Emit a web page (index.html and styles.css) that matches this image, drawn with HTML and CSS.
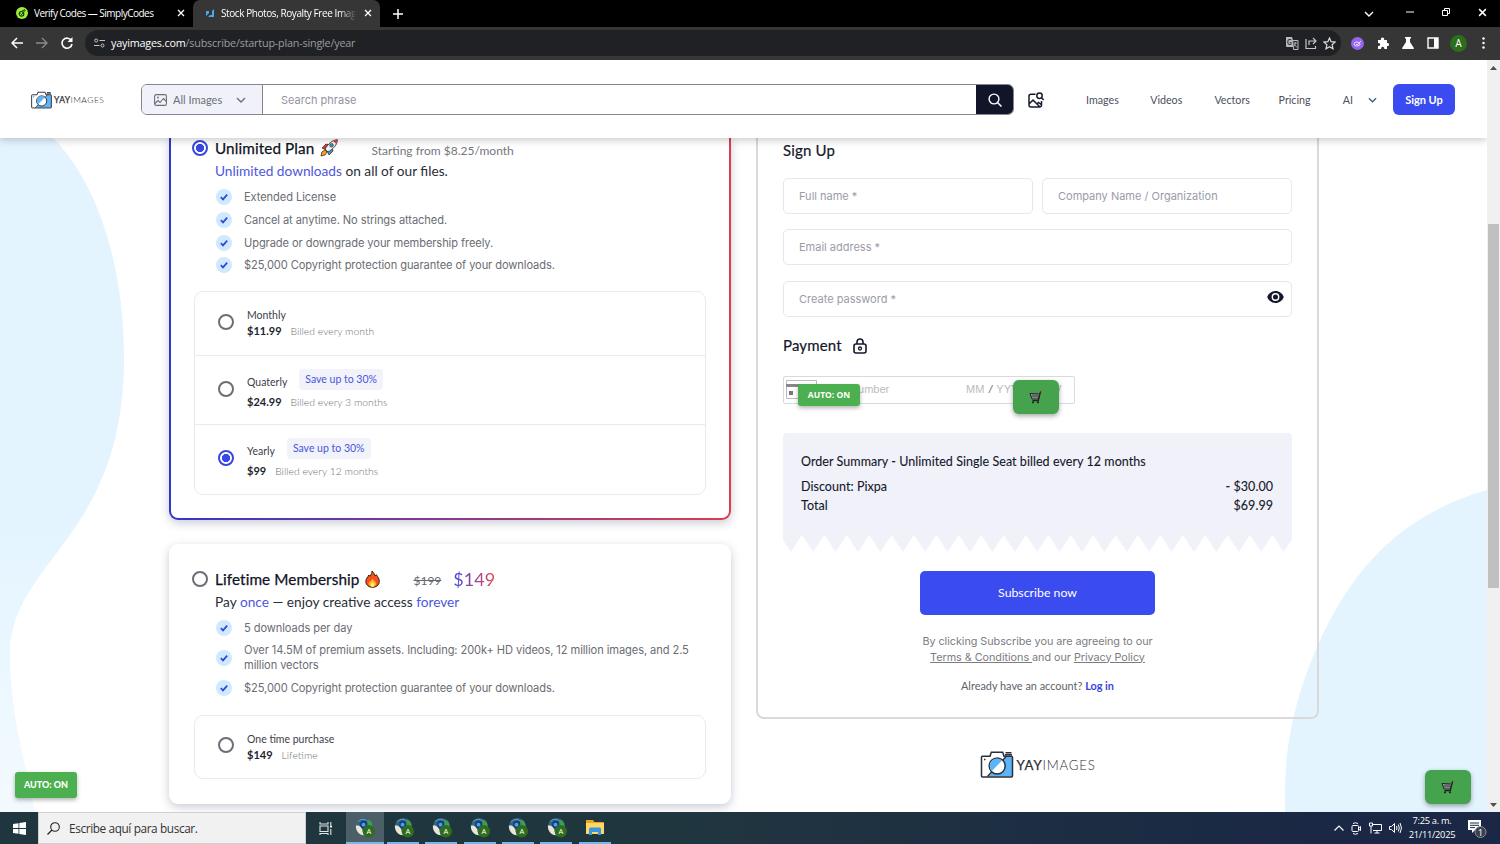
FILE: index.html
```html
<!DOCTYPE html>
<html lang="en">
<head>
    <meta charset="UTF-8">
    <meta name="viewport" content="width=device-width, initial-scale=1.0">
    <title>Stock Photos, Royalty Free Images</title>
    <link rel="stylesheet" href="styles.css">
</head>
<body>
    <svg class="defs">
        <symbol id="camera" viewBox="0 0 33 27">
            <path d="M31.8 5.5v20H7.5L25 6z" fill="#5db4f9"/>
            <path d="M2 5.3h7.5l1.3-4h11.4l1.3 4H31a1 1 0 0 1 1 1V25a1 1 0 0 1-1 1H2a1 1 0 0 1-1-1V6.300a1 1 0 0 1 1-1z" fill="none" stroke="#2b2f38" stroke-width="1.5"/>
            <circle cx="16.700" cy="15" r="8" fill="#fff" stroke="#2b2f38" stroke-width="1.500"/>
            <path d="M11.300 20A7.200 7.200 0 0 1 21.500 9.600z" fill="#5db4f9"/>
            <path d="M7 25.500l4.500-5M22 9.500l4-4.500M3.500 8.500h1.500" stroke="#2b2f38" stroke-width="1.300"/>
            <path d="M25 1.800h6M24.500 3.800h7" stroke="#2b2f38" stroke-width="1.400"/>
        </symbol>
        <symbol id="check" viewBox="0 0 16 16">
            <circle cx="8" cy="8" r="8" fill="#cfe9ff"/>
            <path d="M4.800 8.200l2.200 2.200 4.200-4.800" fill="none" stroke="#3344dd" stroke-width="1.700"/>
        </symbol>
        <symbol id="cart" viewBox="0 0 14 14">
            <path d="M1 3.500l9.500 .5-1.200 5H3z" fill="#a9adb3" stroke="#222" stroke-width="1"/>
            <path d="M4 4v4.500M6 4v4.500M8 4v4.500M2 6h7.500" stroke="#333" stroke-width=".700"/>
            <path d="M13 1.300l-1.500.4-2.200 9H3.500" fill="none" stroke="#222" stroke-width="1.300"/>
            <path d="M11.800 1.600l1.500-.4" stroke="#e05a3a" stroke-width="1.300"/>
            <circle cx="4" cy="12.300" r="1.100" fill="#222"/><circle cx="9" cy="12.300" r="1.100" fill="#222"/>
        </symbol>
        <symbol id="profile" viewBox="-1 0 22 22">
            <circle cx="10" cy="10" r="9" fill="#2f6583"/>
            <path d="M1 9c4-1 6 2 7 5s3 4 3 5C5 20 .5 15 1 9z" fill="#e9e6d8"/>
            <path d="M3 5c4-4 9-3 11 1" fill="none" stroke="#6ba5cb" stroke-width="1"/>
            <circle cx="9.500" cy="8" r="4" fill="#173f75"/><circle cx="9" cy="8" r="2" fill="#4f9df0"/>
            <path d="M13 3c4 0 6 4 5 9h-5z" fill="#3f9c55"/>
            <circle cx="14.500" cy="15" r="6.500" fill="#2f6d1c"/>
            <text x="14.500" y="18" text-anchor="middle" font-size="8" fill="#fff">A</text>
        </symbol>
        <symbol id="chevron" viewBox="0 0 10 6"><path d="M1 1l4 4 4-4" fill="none" stroke="currentColor" stroke-width="1.400"/></symbol>
        <symbol id="close" viewBox="0 0 8 8"><path d="M1 1l6 6M7 1L1 7" stroke="currentColor" stroke-width="1.300"/></symbol>
    </svg>

    <div class="tabs">
        <div class="tab">
            <svg width="12" height="12" viewBox="0 0 12 12"><circle cx="6" cy="6" r="6" fill="#a0ee3c"/><circle cx="5.500" cy="6.800" r="2.300" fill="none" stroke="#1b3510" stroke-width="1.200"/><path d="M4.500 6.500l1 1L9.500 3M6 4l3-1.500" fill="none" stroke="#1b3510"/></svg>
            <span class="tab-title">Verify Codes — SimplyCodes</span>
            <svg class="tab-close" width="8" height="8"><use href="#close"/></svg>
        </div>
        <div class="tab active">
            <svg width="10" height="10" viewBox="0 0 10 10"><path d="M9 1v8H3l2-2h2V3zM1 3h3v2L1 8z" fill="#4aa8ec"/></svg>
            <span class="tab-title fade">Stock Photos, Royalty Free Images</span>
            <svg class="tab-close" width="8" height="8"><use href="#close"/></svg>
        </div>
        <svg class="new-tab" width="10" height="10" viewBox="0 0 10 10"><path d="M5 0v10M0 5h10" stroke="#fff" stroke-width="1.500"/></svg>
        <div class="window-buttons">
            <svg width="10" height="6"><use href="#chevron"/></svg>
            <svg width="8" height="8" viewBox="0 0 8 8"><path d="M0 4h8" stroke="#fff"/></svg>
            <svg width="8" height="8" viewBox="0 0 8 8"><path d="M.5 2.500h5v5h-5zM2.500 2V.5h5v5H6" fill="none" stroke="#fff"/></svg>
            <svg width="9" height="9"><use href="#close"/></svg>
        </div>
    </div>

    <div class="toolbar">
        <svg width="12" height="12" viewBox="0 0 12 12"><path d="M12 6H1.500M6 1L1 6l5 5" fill="none" stroke="#fff" stroke-width="1.500"/></svg>
        <svg width="12" height="12" viewBox="0 0 12 12"><path d="M0 6h10.500M6 1l5 5-5 5" fill="none" stroke="#8a8b8d" stroke-width="1.300"/></svg>
        <svg width="12" height="12" viewBox="0 0 12 12"><path d="M10.300 3.500A5 5 0 1 0 11 7" fill="none" stroke="#fff" stroke-width="1.600"/><path d="M11.500 0v5h-5z" fill="#fff"/></svg>
        <div class="address">
            <svg width="11" height="10" viewBox="0 0 11 10"><path d="M5.500 2.500H11M0 7.500h5.500" stroke="#c4c7c5" stroke-width="1.200"/><circle cx="2.200" cy="2.500" r="1.500" fill="none" stroke="#c4c7c5"/><circle cx="8.500" cy="7.500" r="1.500" fill="none" stroke="#c4c7c5"/></svg>
            <span class="url"><b>yayimages.com</b>/subscribe/startup-plan-single/year</span>
            <div class="address-icons">
                <svg width="13" height="13" viewBox="0 0 13 13"><path d="M0 0h6l3 10H1a1 1 0 0 1-1-1z" fill="#b9bbbd"/><path d="M6.500 3.500H12v9H7.500z" fill="#292a2e" stroke="#b9bbbd"/><path d="M7.500 6H11M9.300 5v1c0 2-1 3-1.800 3.700M8 7l3 3.500" stroke="#b9bbbd" stroke-width=".8" fill="none"/><text x="1" y="7.500" font-size="6.500" font-weight="700" fill="#292a2e">G</text></svg>
                <svg width="12" height="13" viewBox="0 0 12 13"><path d="M1 2v9.500h9.500V9M4 8V4h6M8 1l3 3-3 3" fill="none" stroke="#c4c7c5" stroke-width="1.200"/></svg>
                <svg width="13" height="13" viewBox="0 0 13 13"><path d="M6.500 1l1.600 3.700 4 .4-3 2.700.9 4-3.500-2.100-3.500 2.100.9-4-3-2.700 4-.4z" fill="none" stroke="#dcdedd" stroke-width="1.200"/></svg>
            </div>
        </div>
        <div class="extensions">
            <svg width="13" height="13" viewBox="0 0 13 13"><circle cx="6.500" cy="6.500" r="6.500" fill="#9466ee"/><ellipse cx="6" cy="7" rx="3" ry="2" fill="none" stroke="#e5d9ff"/><path d="M5 7l1 1 4-4" fill="none" stroke="#e5d9ff"/></svg>
            <svg width="12" height="12" viewBox="0 0 12 12"><path d="M1 3h3a1.700 1.700 0 1 1 3 0h3v3a1.600 1.600 0 1 1 0 3v3H7.200a1.600 1.600 0 1 0-3 0H1V9a1.600 1.600 0 1 0 0-3z" fill="#fff"/></svg>
            <svg width="12" height="12" viewBox="0 0 12 12"><path d="M3 0h6v1.500H8V5l4 6.200-.5.800H.5L0 11.200 4 5V1.500H3z" fill="#fff"/></svg>
            <svg width="12" height="12" viewBox="0 0 12 12"><path d="M1 1h10v10H1z" fill="none" stroke="#fff" stroke-width="1.400"/><path d="M7 1h4v10H7z" fill="#fff"/></svg>
            <span class="avatar">A</span>
            <svg width="3" height="12" viewBox="0 0 3 12"><circle cx="1.500" cy="1.500" r="1.200" fill="#fff"/><circle cx="1.500" cy="6" r="1.200" fill="#fff"/><circle cx="1.500" cy="10.500" r="1.200" fill="#fff"/></svg>
        </div>
    </div>

    <div class="viewport">
        <div class="site">
            <svg class="shapes" width="1487" height="752" viewBox="0 60 1487 752">
                <defs><linearGradient id="fadeBlue" x1="0" y1="0" x2="0" y2="1"><stop offset="0" stop-color="#e3f4ff"/><stop offset=".6" stop-color="#e3f4ff"/><stop offset="1" stop-color="#f3faff"/></linearGradient></defs>
                <path d="M0 60V812H35C28 770 10 720 10 655C10 560 124 540 124 358C124 260 95 180 53 138V60z" fill="url(#fadeBlue)"/>
                <path d="M1487 490C1400 515 1358 568 1330 620C1303 672 1285 730 1285 790V812H1487z" fill="#e4f4ff"/>
            </svg>

            <header class="header">
                <div class="logo">
                    <svg width="21" height="18"><use href="#camera"/></svg>
                    <span class="logo-text"><b>YAY</b>IMAGES</span>
                </div>
                <div class="search">
                    <div class="search-type">
                        <svg width="13" height="12" viewBox="0 0 13 12"><rect x=".6" y=".6" width="11.800" height="10.800" rx="1.500" fill="none" stroke="#6b6e78" stroke-width="1.100"/><path d="M1 9.500l3-3 2 2 3.500-4 3 3" fill="none" stroke="#6b6e78" stroke-width="1.100"/><circle cx="4" cy="3.500" r=".9" fill="#6b6e78"/></svg>
                        <span>All Images</span>
                        <svg width="10" height="6"><use href="#chevron"/></svg>
                    </div>
                    <div class="search-input">Search phrase</div>
                    <div class="search-button">
                        <svg width="14" height="14" viewBox="0 0 14 14"><circle cx="6" cy="6" r="4.900" fill="none" stroke="#fff" stroke-width="1.400"/><path d="M9.500 9.500l4 4" stroke="#fff" stroke-width="1.500"/></svg>
                    </div>
                </div>
                <svg class="image-search" width="16" height="16" viewBox="0 0 16 16"><path d="M7.500 2.300H3a2 2 0 0 0-2 2V13a2 2 0 0 0 2 2h8.500a2 2 0 0 0 2-2V9M1.500 11.500L5 8l6.500 6.500M9 12l1.500-1.500 2.700 2" fill="none" stroke="#161a2b" stroke-width="1.500"/><circle cx="11.500" cy="3.800" r="2.700" fill="none" stroke="#161a2b" stroke-width="1.500"/><path d="M13.500 5.800l2.200 2.200" stroke="#161a2b" stroke-width="1.500"/></svg>
                <nav class="nav">
                    <a>Images</a>
                    <a>Videos</a>
                    <a>Vectors</a>
                    <a>Pricing</a>
                    <a>AI</a>
                    <svg width="9" height="6"><use href="#chevron"/></svg>
                </nav>
                <div class="signup-button">Sign Up</div>
            </header>

            <main class="content">
                <div class="plans">
                    <section class="plan selected">
                        <div class="plan-title">
                            <span class="radio on"></span>
                            <h2>Unlimited Plan</h2>
                            <svg class="rocket" width="18" height="18" viewBox="0 0 18 18"><path d="M2 9l4-4 4 1-4 5z" fill="#e33c2d" stroke="#222" stroke-width=".7"/><path d="M9 16l4-4-1-4-5 4z" fill="#3a9fc0" stroke="#222" stroke-width=".7"/><path d="M5 10C8 5 12 1 17.300 .7 17.500 6 13 10 8 13z" fill="#edf2f4" stroke="#222" stroke-width=".8"/><path d="M13 1.900L17.300.7l-.9 4.300z" fill="#e23b35"/><circle cx="11.500" cy="6.300" r="1.800" fill="#3a9fc0" stroke="#222" stroke-width=".6"/><path d="M5 11l2 2-2 3-4 1 .8-4z" fill="#ff9c20" stroke="#222" stroke-width=".7"/></svg>
                            <span class="starting">Starting from $8.25/month</span>
                        </div>
                        <p class="tagline"><em>Unlimited downloads</em> on all of our files.</p>
                        <ul class="features">
                            <li><svg width="16" height="16"><use href="#check"/></svg>Extended License</li>
                            <li><svg width="16" height="16"><use href="#check"/></svg>Cancel at anytime. No strings attached.</li>
                            <li><svg width="16" height="16"><use href="#check"/></svg>Upgrade or downgrade your membership freely.</li>
                            <li><svg width="16" height="16"><use href="#check"/></svg>$25,000 Copyright protection guarantee of your downloads.</li>
                        </ul>
                        <div class="options">
                            <div class="option">
                                <span class="radio"></span>
                                <div>
                                    <div class="period"><span>Monthly</span></div>
                                    <div class="price"><b>$11.99</b><span>Billed every month</span></div>
                                </div>
                            </div>
                            <div class="option tall">
                                <span class="radio"></span>
                                <div>
                                    <div class="period"><span>Quaterly</span><span class="save">Save up to 30%</span></div>
                                    <div class="price"><b>$24.99</b><span>Billed every 3 months</span></div>
                                </div>
                            </div>
                            <div class="option tall">
                                <span class="radio on"></span>
                                <div>
                                    <div class="period"><span>Yearly</span><span class="save">Save up to 30%</span></div>
                                    <div class="price"><b>$99</b><span>Billed every 12 months</span></div>
                                </div>
                            </div>
                        </div>
                    </section>

                    <section class="plan lifetime">
                        <div class="plan-title">
                            <span class="radio"></span>
                            <h2>Lifetime Membership</h2>
                            <svg class="fire" width="15" height="18" viewBox="0 0 15 18"><path d="M7 1c2 2 2.500 3.500 3.300 5l1-1.300c1.800 2.500 3 4.300 3 6.800C14.300 15 11 17.300 7.500 17.300S.8 15 .8 11.500C.8 8.500 3 7.500 3.700 5l1.200 1.300C6.500 4.500 7 3 7 1z" fill="#f4511e" stroke="#3b1a10" stroke-width="1"/><path d="M7.500 8.500c.5 2 3.700 3 3.700 5.300 0 2-1.700 3-3.700 3s-3.900-1-3.900-3c0-2.300 3.400-2.800 3.900-5.300z" fill="#ffb51c"/><path d="M7.500 12c1 1.500 1.800 2 1.800 3.200 0 1-.8 1.500-1.800 1.500s-1.800-.5-1.800-1.500c0-1.200.8-1.700 1.800-3.200z" fill="#ffed78"/></svg>
                            <del>$199</del>
                            <span class="new-price">$149</span>
                        </div>
                        <p class="tagline">Pay <em>once</em> — enjoy creative access <em>forever</em></p>
                        <ul class="features">
                            <li><svg width="16" height="16"><use href="#check"/></svg>5 downloads per day</li>
                            <li class="two-lines"><svg width="16" height="16"><use href="#check"/></svg><span>Over 14.5M of premium assets. Including: 200k+ HD videos, 12 million images, and 2.5<br>million vectors</span></li>
                            <li><svg width="16" height="16"><use href="#check"/></svg>$25,000 Copyright protection guarantee of your downloads.</li>
                        </ul>
                        <div class="options">
                            <div class="option">
                                <span class="radio"></span>
                                <div>
                                    <div class="period"><span>One time purchase</span></div>
                                    <div class="price"><b>$149</b><span>Lifetime</span></div>
                                </div>
                            </div>
                        </div>
                    </section>
                </div>

                <div class="checkout">
                    <section class="panel">
                        <h2 class="signup-title">Sign Up</h2>
                        <div class="fields">
                            <div class="field">Full name *</div>
                            <div class="field">Company Name / Organization</div>
                            <div class="field wide">Email address *</div>
                            <div class="field wide">Create password *
                                <svg width="17" height="12" viewBox="0 0 17 12"><path d="M8.500 0C4.700 0 1.600 2.400.2 6c1.400 3.600 4.500 6 8.300 6s6.900-2.400 8.300-6C15.400 2.400 12.300 0 8.500 0z" fill="#14182b"/><circle cx="8.500" cy="6" r="3.200" fill="none" stroke="#fff" stroke-width="1.400"/></svg>
                            </div>
                        </div>
                        <h2 class="payment-title">Payment
                            <svg width="14" height="16" viewBox="0 0 14 16"><rect x="1" y="6" width="12" height="9" rx="2" fill="none" stroke="#14182b" stroke-width="1.600"/><path d="M4 6V4a3 3 0 0 1 6 0v2" fill="none" stroke="#14182b" stroke-width="1.600"/><circle cx="7" cy="10.500" r="1.500" fill="none" stroke="#14182b" stroke-width="1.300"/></svg>
                        </h2>
                        <div class="card-input">
                            <svg width="31" height="19" viewBox="0 0 31 19"><path d="M.5.5h30v18H.5z" fill="#fff" stroke="#bbb"/><path d="M0 4h31v3H0z" fill="#888"/><path d="M3 11h4v4H3z" fill="#777"/></svg>
                            <span class="card-number">Card number</span>
                            <span class="card-date">MM <i>/</i> YYYY</span>
                            <span class="card-cvv">CVV</span>
                            <div class="auto">AUTO: ON</div>
                            <div class="cart"><svg width="14" height="14"><use href="#cart"/></svg></div>
                        </div>
                        <div class="summary">
                            <h3>Order Summary - Unlimited Single Seat billed every 12 months</h3>
                            <div class="summary-row"><span>Discount: Pixpa</span><span>- $30.00</span></div>
                            <div class="summary-row"><span>Total</span><span>$69.99</span></div>
                        </div>
                        <svg class="zigzag" width="509" height="17">
                            <defs><pattern id="teeth" x="-3.400" width="22.400" height="17" patternUnits="userSpaceOnUse"><path d="M0 0h22.400L11.200 17z" fill="#f1f2f9"/></pattern></defs>
                            <rect width="509" height="17" fill="url(#teeth)"/>
                        </svg>
                        <div class="subscribe">Subscribe now</div>
                        <p class="terms">By clicking Subscribe you are agreeing to our<br><u>Terms &amp; Conditions </u>and our <u>Privacy Policy</u></p>
                        <p class="login">Already have an account? <b>Log in</b></p>
                    </section>
                    <div class="logo big">
                        <svg width="34" height="27"><use href="#camera"/></svg>
                        <span class="logo-text"><b>YAY</b>IMAGES</span>
                    </div>
                </div>
            </main>

            <div class="auto page-auto">AUTO: ON</div>
            <div class="cart page-cart"><svg width="14" height="14"><use href="#cart"/></svg></div>
        </div>
        <div class="scrollbar">
            <svg width="7" height="4" viewBox="0 0 7 4"><path d="M0 4l3.500-4L7 4z" fill="#505050"/></svg>
            <div class="thumb"></div>
            <svg width="7" height="4" viewBox="0 0 7 4"><path d="M0 0l3.500 4L7 0z" fill="#505050"/></svg>
        </div>
    </div>

    <div class="taskbar">
        <div class="start"><svg width="13" height="13" viewBox="0 0 13 13"><path d="M0 2l5.500-.8V6H0zM6.300 1L13 0v6H6.300zM0 7h5.500v4.800L0 11zM6.300 7H13v6l-6.700-1z" fill="#fff"/></svg></div>
        <div class="taskbar-search">
            <svg width="13" height="13" viewBox="0 0 13 13"><circle cx="8" cy="5" r="4.300" fill="none" stroke="#222" stroke-width="1.100"/><path d="M5 8l-4.500 4.500" stroke="#222" stroke-width="1.200"/></svg>
            <span>Escribe aquí para buscar.</span>
        </div>
        <div class="taskview"><svg width="13" height="13" viewBox="0 0 13 13"><path d="M1 4h8v5.500H1zM1 0v2h8V0M1 13v-1.500h8V13M11.800 0v3M11.800 7v6" fill="none" stroke="#dfe5e8" stroke-width="1.100"/><path d="M11 3.500h2v2h-2z" fill="#fff"/></svg></div>
        <div class="apps">
            <div class="app current"><svg width="21" height="21"><use href="#profile"/></svg></div>
            <div class="app"><svg width="21" height="21"><use href="#profile"/></svg></div>
            <div class="app"><svg width="21" height="21"><use href="#profile"/></svg></div>
            <div class="app"><svg width="21" height="21"><use href="#profile"/></svg></div>
            <div class="app"><svg width="21" height="21"><use href="#profile"/></svg></div>
            <div class="app"><svg width="21" height="21"><use href="#profile"/></svg></div>
            <div class="app"><svg width="18" height="15" viewBox="0 0 18 15"><path d="M0 0h7l1.500 2H17a1 1 0 0 1 1 1v11H0z" fill="#e8a71e"/><path d="M0 3h18v11H0z" fill="#ffd766"/><path d="M3 15V9a1.500 1.500 0 0 1 1.500-1.500h9A1.500 1.500 0 0 1 15 9v6h-3v-3H6v3z" fill="#3a96dd"/></svg></div>
        </div>
        <div class="tray">
            <svg width="10" height="6" viewBox="0 0 10 6"><path d="M.5 5.500L5 1l4.500 4.500" fill="none" stroke="#fff" stroke-width="1.100"/></svg>
            <svg width="11" height="13" viewBox="0 0 11 13"><rect x="1" y="3.500" width="6.500" height="6" rx="1" fill="none" stroke="#fff"/><path d="M7.500 6l2-1.500v4L7.500 7M2 1.500q2.500-1.500 5 0M2 11.500q2.500 1.500 5 0" fill="none" stroke="#fff"/></svg>
            <svg width="13" height="12" viewBox="0 0 13 12"><path d="M4 2.500h8.500v6H4M8 8.500v2.500M5.500 11h5M.5 1h3v3h-3zM2 4v7.500" fill="none" stroke="#fff"/></svg>
            <svg width="13" height="12" viewBox="0 0 13 12"><path d="M.5 4.500h2l3-3v9l-3-3h-2zM7.500 4q1 2 0 4M9.300 2.500q2 3.500 0 7M11 1q3 5 0 10" fill="none" stroke="#fff"/></svg>
            <div class="clock">7:25 a. m.<br>21/11/2025</div>
            <svg width="20" height="20" viewBox="0 0 20 20"><path d="M1 2h13v10H8l-3 3v-3H1z" fill="#fff"/><path d="M3 5h9M3 7.300h9M3 9.600h5" stroke="#1c2a45"/><circle cx="13.500" cy="14" r="5.500" fill="#3a414d" stroke="#8a919c"/><text x="13.500" y="17.500" text-anchor="middle" font-size="9.500" fill="#fff">1</text></svg>
        </div>
    </div>
</body>
</html>
```
FILE: styles.css
```css
* {
    box-sizing: border-box;
}
body {
    margin: 0;
    width: 1500px;
    height: 844px;
    overflow: hidden;
    display: flex;
    flex-direction: column;
    font-family: 'Lato', sans-serif;
    background: #fff;
    color: #14182b;
}
h2, h3, p, ul {
    margin: 0;
    padding: 0;
    font-weight: normal;
}
svg {
    flex-shrink: 0;
    display: block;
}
.defs {
    position: absolute;
    width: 0;
    height: 0;
}

/* browser */
.tabs {
    height: 27px;
    background: #000;
    display: flex;
    align-items: center;
    color: #fff;
    font: 10px 'Open Sans', sans-serif;
}
.tab {
    height: 27px;
    width: 193px;
    padding: 0 8px 1px 16px;
    display: flex;
    align-items: center;
    white-space: nowrap;
}
.tab.active {
    width: 187px;
    padding: 0 8px 1px 12px;
    background: #363636;
    border-radius: 7px 7px 0 0;
}
.tab-title {
    margin-left: 6px;
    letter-spacing: -0.52px;
}
.tab-title.fade {
    width: 134px;
    overflow: hidden;
    letter-spacing: -0.42px;
    -webkit-mask-image: linear-gradient(to right, #000 118px, transparent 136px);
}
.tab-close {
    margin-left: auto;
}
.new-tab {
    margin-left: 13px;
}
.window-buttons {
    margin: -3px 13px 0 auto;
    display: flex;
    align-items: center;
    gap: 28px;
}
.window-buttons svg:first-child {
    margin: 4px 4px 0 0;
}
.toolbar {
    height: 33px;
    background: #363636;
    display: flex;
    align-items: center;
    gap: 13px;
    padding: 0 15px 1px 11px;
}
.address {
    height: 26px;
    width: 1256px;
    margin-left: -1px;
    border-radius: 13px;
    background: #202124;
    display: flex;
    align-items: center;
    padding: 0 5px 0 9px;
}
.url {
    margin: -1px 0 0 6px;
    font: 10.8px 'Open Sans', sans-serif;
    color: #9a9da1;
    letter-spacing: -0.2px;
}
.url b {
    font-weight: normal;
    color: #fff;
}
.address-icons {
    margin-left: auto;
    display: flex;
    align-items: center;
    gap: 6px;
}
.extensions {
    flex: 1;
    display: flex;
    align-items: center;
    justify-content: space-between;
    margin-left: -3px;
}
.avatar {
    width: 17px;
    height: 17px;
    margin: 0 2px 0 -2px;
    border-radius: 50%;
    background: #2c6e1b;
    color: #fff;
    font: 10px/17px Roboto, sans-serif;
    text-align: center;
}
.viewport {
    height: 752px;
    display: flex;
}
.site {
    width: 1487px;
    height: 752px;
    position: relative;
    overflow: hidden;
}
.shapes {
    position: absolute;
    left: 0;
    top: 0;
}
.scrollbar {
    width: 13px;
    background: #f0f0f0;
    display: flex;
    flex-direction: column;
    align-items: center;
    justify-content: space-between;
    padding: 6px 0 5px;
}
.thumb {
    width: 11px;
    height: 364px;
    margin-bottom: 62px;
    background: #c0c0c0;
}

/* header */
.header {
    position: relative;
    z-index: 2;
    height: 78px;
    padding: 1px 32px 0 31px;
    background: #fff;
    box-shadow: 0 2px 8px rgba(0, 0, 0, 0.22);
    display: flex;
    align-items: center;
}
.logo {
    width: 110px;
    display: flex;
    align-items: center;
    gap: 2px;
}
.logo-text {
    font-size: 8.5px;
    font-weight: 300;
    letter-spacing: 0.45px;
    color: #2c2f36;
}
.logo-text b {
    -webkit-text-stroke: 0.25px;
}
.search {
    width: 873px;
    height: 31px;
    display: flex;
    border: 1px solid #85858b;
    border-radius: 6px;
    overflow: hidden;
}
.search-type {
    width: 121px;
    background: #f1f2f9;
    border-right: 1px solid #85858b;
    display: flex;
    align-items: center;
    padding: 0 16px 0 12px;
    font-size: 11px;
    color: #6b6e78;
}
.search-type span {
    margin: 0 auto 0 6px;
}
.search-input {
    flex: 1;
    padding-left: 18px;
    font: 11px/31px Inter, sans-serif;
    color: #92949f;
}
.search-button {
    width: 38px;
    margin: -1px;
    background: #10152a;
    display: flex;
    align-items: center;
    justify-content: center;
}
.image-search {
    margin-left: 14px;
}
.nav {
    margin-left: 42px;
    display: flex;
    align-items: center;
    font-size: 10.7px;
    color: #4c505b;
}
.nav a {
    width: 64.200px;
}
.nav a:nth-child(5) {
    width: 25px;
}
.nav svg {
    color: #3e6078;
}
.signup-button {
    margin-left: auto;
    width: 62px;
    height: 31px;
    border-radius: 6px;
    background: #3a4cf0;
    color: #fff;
    font-size: 11px;
    font-weight: bold;
    line-height: 31px;
    text-align: center;
}

/* plans */
.content {
    position: relative;
    display: flex;
    gap: 25px;
    padding-left: 169px;
}
.plans {
    width: 562px;
}
.plan {
    background: #fff;
    border-radius: 9px;
    box-shadow: 0 3px 10px rgba(40, 50, 90, 0.25);
}
.plan.selected {
    height: 382px;
    padding: 0 23px;
    border: 2px solid transparent;
    border-top: none;
    border-radius: 0 0 9px 9px;
    background: linear-gradient(#fff, #fff) padding-box, linear-gradient(to right, #3436c8, #dd3c50) border-box;
}
.plan.lifetime {
    height: 260px;
    margin-top: 24px;
    padding: 25px 25px 0;
}
.plan-title {
    height: 22px;
    padding-bottom: 2px;
    display: flex;
    align-items: center;
    margin-left: -2px;
}
.plan-title h2 {
    margin-left: 7px;
    font-size: 15.3px;
    letter-spacing: 0.1px;
    color: #10131f;
    -webkit-text-stroke: 0.25px;
}
.rocket, .fire {
    margin-left: 6px;
}
.radio {
    width: 16px;
    height: 16px;
    flex-shrink: 0;
    border: 2px solid #6b6e75;
    border-radius: 50%;
    background: #fff;
}
.radio.on {
    border-color: #3848e0;
    background: radial-gradient(#3848e0 3.8px, #fff 4.4px);
}
.starting {
    margin: 4px 0 0 33px;
    font-size: 12px;
    color: #74767c;
}
.tagline {
    height: 22px;
    line-height: 22px;
    padding-left: 21px;
    font-size: 13.7px;
    color: #2b2e37;
}
.tagline em {
    font-style: normal;
    color: #4d58dc;
}
.features {
    list-style: none;
    margin-top: 4px;
    padding-left: 21.500px;
    font: 11.1px Inter, sans-serif;
    letter-spacing: -0.08px;
    color: #6a6d73;
}
.features li {
    height: 22.7px;
    display: flex;
    align-items: center;
    gap: 12.500px;
}
.features .two-lines {
    height: 37.300px;
    line-height: 15.5px;
}
.options {
    margin-top: 14px;
    border: 1px solid #e9eaee;
    border-radius: 9px;
}
.option {
    height: 63px;
    display: flex;
    align-items: center;
    padding: 0 0 3px 23px;
    gap: 13px;
}
.option > div {
    padding-top: 4px;
}
.option.tall {
    height: 69.500px;
    border-top: 1px solid #e9eaee;
}
.option.tall > div {
    padding-top: 1px;
}
.period {
    display: flex;
    align-items: flex-end;
    font-size: 10.5px;
    line-height: 15px;
    color: #3d4048;
}
.tall .period > span:first-child {
    margin-bottom: 4px;
}
.period .save {
    margin: 0 0 4px 12px;
    padding: 0 6px;
    height: 21px;
    line-height: 21px;
    border-radius: 4px;
    background: #f1f2fa;
    color: #4a55dc;
}
.price {
    display: flex;
    gap: 9px;
    font-size: 10.4px;
    font-weight: 300;
    line-height: 16px;
    color: #6d6f75;
}
.price b {
    font-size: 11px;
    font-weight: 700;
    color: #22252e;
}
.lifetime .features {
    margin-top: 4px;
}
.lifetime .options {
    margin-top: 15px;
}
.lifetime .option {
    height: 62px;
}
del {
    margin: 3px 0 0 33px;
    font-size: 12px;
    color: #65676d;
}
.new-price {
    margin-left: 12px;
    font-size: 18px;
    background: linear-gradient(to right, #3f48d8, #e0445a);
    -webkit-background-clip: text;
    color: transparent;
}

/* checkout */
.checkout {
    width: 563px;
}
.panel {
    height: 581px;
    padding: 0 25px;
    border: 2px solid #d9d9dc;
    border-top: none;
    border-radius: 0 0 8px 8px;
}
.panel h2 {
    font-size: 15px;
    letter-spacing: 0.15px;
    -webkit-text-stroke: 0.2px;
}
.signup-title {
    height: 39.500px;
    line-height: 24px;
}
.fields {
    display: grid;
    grid-template-columns: 1fr 1fr;
    gap: 15.500px 9px;
}
.field {
    height: 36px;
    border: 1px solid #e6e7ea;
    border-radius: 5px;
    padding: 0 7px 0 15px;
    display: flex;
    align-items: center;
    justify-content: space-between;
    background: #fff;
    font: 11px Inter, sans-serif;
    color: #9a9ca8;
}
.field svg {
    margin-bottom: 3px;
}
.field.wide {
    grid-column: span 2;
}
.payment-title {
    height: 59.500px;
    padding-bottom: 2px;
    display: flex;
    align-items: center;
    gap: 11px;
}
.payment-title svg {
    margin-top: 2px;
}
.card-input {
    position: relative;
    width: 292px;
    height: 28px;
    border: 1px solid #dadada;
    border-radius: 2px;
    display: flex;
    align-items: center;
    padding: 0 0 2px 2px;
    font: 11px 'Liberation Sans', sans-serif;
    color: #bbb;
    background: #fff;
}
.card-number {
    width: 141px;
    margin-left: 8px;
}
.card-date {
    width: 73px;
    word-spacing: 1.500px;
}
.card-date i {
    color: #666;
}
.auto {
    position: absolute;
    left: 14px;
    top: 7px;
    width: 62px;
    height: 22px;
    border-radius: 3px;
    background: #4caf50;
    box-shadow: 0 2px 4px rgba(0, 0, 0, 0.3);
    color: #fff;
    font: bold 8.5px/22px 'Open Sans', sans-serif;
    text-align: center;
}
.cart {
    position: absolute;
    left: 229px;
    top: 3px;
    width: 46px;
    height: 34px;
    border-radius: 6px;
    background: #45a34d;
    box-shadow: 0 2px 5px rgba(0, 0, 0, 0.35);
    display: flex;
    align-items: center;
    justify-content: center;
}
.page-auto {
    left: 15px;
    top: 712px;
    height: 26px;
    line-height: 26px;
    font-family: 'Lato', sans-serif;
    font-weight: 900;
    font-size: 9px;
}
.page-cart {
    left: 1425px;
    top: 710px;
}
.summary {
    height: 102px;
    margin-top: 29px;
    padding: 19px 19px 0 18px;
    border-radius: 4px 4px 0 0;
    background: #f1f2f9;
    font-size: 12.500px;
    line-height: 19px;
    letter-spacing: 0.05px;
    -webkit-text-stroke: 0.1px;
}
.summary h3 {
    font-size: 12.500px;
    margin-bottom: 6px;
}
.summary-row {
    display: flex;
    justify-content: space-between;
}
.subscribe {
    width: 235px;
    height: 44px;
    margin: 19px auto 0;
    border-radius: 5px;
    background: #3a4cf0;
    color: #fff;
    font-size: 12.300px;
    line-height: 44px;
    text-align: center;
}
.terms {
    margin-top: 19px;
    font: 10.800px/15.500px Inter, sans-serif;
    letter-spacing: -0.03px;
    color: #7a7c82;
    text-align: center;
}
.login {
    margin-top: 13px;
    font-size: 10.9px;
    line-height: 15px;
    text-align: center;
    color: #606269;
}
.login b {
    color: #3a48dc;
}
.logo.big {
    width: auto;
    margin-top: 32px;
    justify-content: center;
    gap: 3px;
}
.big .logo-text {
    font-size: 13.2px;
    letter-spacing: 0.8px;
}

/* taskbar */
.taskbar {
    height: 32px;
    background: linear-gradient(to right, #20363f 45%, #1a2745 90%);
    display: flex;
    font-family: 'Open Sans', sans-serif;
    color: #fff;
}
.start {
    width: 38px;
    display: flex;
    align-items: center;
    justify-content: center;
}
.taskbar-search {
    width: 268px;
    background: #f1f1f1;
    border: 1px solid #d0d0d0;
    color: #333;
    font-size: 11.8px;
    letter-spacing: -0.38px;
    display: flex;
    align-items: center;
    gap: 9px;
    padding-left: 8px;
}
.taskview {
    width: 39px;
    display: flex;
    align-items: center;
    justify-content: center;
}
.apps {
    display: flex;
}
.app {
    width: 32px;
    margin: 0 3.150px;
    border-bottom: 2px solid #76b9ed;
    display: flex;
    align-items: center;
    justify-content: center;
}
.app.current {
    width: 38px;
    margin: 0 0.500px;
    background: #4c5e67;
}
.tray {
    margin-left: auto;
    padding-right: 13px;
    display: flex;
    align-items: center;
    gap: 7px;
}
.clock {
    width: 48px;
    margin: 0 4px 0 -1px;
    font-size: 9.300px;
    line-height: 14px;
    letter-spacing: -0.300px;
    text-align: center;
}
```
